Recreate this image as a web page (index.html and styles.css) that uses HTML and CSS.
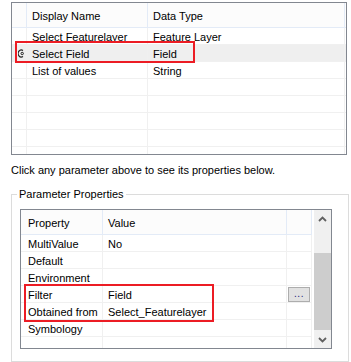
FILE: index.html
```html
<!DOCTYPE html>
<html lang="en">
<head>
  <meta charset="UTF-8" />
  <meta name="viewport" content="width=device-width, initial-scale=1.0" />
  <title>Tool Parameters</title>
  <link rel="stylesheet" href="styles.css">
</head>
<body>
  <div class="param-list">
    <div class="grid-row grid-head">
      <div class="cell rowhead"></div>
      <div class="cell">Display Name</div>
      <div class="cell">Data Type</div>
      <div class="cell filler"></div>
    </div>
    <div class="grid-row">
      <div class="cell rowhead"></div>
      <div class="cell">Select Featurelayer</div>
      <div class="cell">Feature Layer</div>
      <div class="cell filler"></div>
    </div>
    <div class="grid-row selected">
      <div class="cell rowhead">
        <svg class="row-mark" width="6" height="9" viewBox="0 0 6 9"><path d="M5 1.5 A3.2 3.5 0 1 0 5 7.5" fill="none" stroke="#222" stroke-width="1.2"/><circle cx="4.2" cy="4.5" r="1.2" fill="none" stroke="#222" stroke-width="1"/></svg>
      </div>
      <div class="cell">Select Field</div>
      <div class="cell">Field</div>
      <div class="cell filler"></div>
    </div>
    <div class="grid-row">
      <div class="cell rowhead"></div>
      <div class="cell">List of values</div>
      <div class="cell">String</div>
      <div class="cell filler"></div>
    </div>
    <div class="grid-row"><div class="cell rowhead"></div><div class="cell"></div><div class="cell"></div><div class="cell filler"></div></div>
    <div class="grid-row"><div class="cell rowhead"></div><div class="cell"></div><div class="cell"></div><div class="cell filler"></div></div>
    <div class="grid-row"><div class="cell rowhead"></div><div class="cell"></div><div class="cell"></div><div class="cell filler"></div></div>
    <div class="grid-row"><div class="cell rowhead"></div><div class="cell"></div><div class="cell"></div><div class="cell filler"></div></div>
    <div class="grid-row"><div class="cell rowhead"></div><div class="cell"></div><div class="cell"></div><div class="cell filler"></div></div>

    <div class="highlight highlight-field"></div>
  </div>

  <p class="hint">Click any parameter above to see its properties below.</p>

  <fieldset class="param-props">
    <legend>Parameter Properties</legend>
    <div class="prop-grid">
      <div class="prop-table">
        <div class="prop-row grid-head">
          <div class="cell">Property</div>
          <div class="cell">Value</div>
          <div class="cell"></div>
        </div>
        <div class="prop-row">
          <div class="cell">MultiValue</div>
          <div class="cell">No</div>
          <div class="cell"></div>
        </div>
        <div class="prop-row">
          <div class="cell">Default</div>
          <div class="cell"></div>
          <div class="cell"></div>
        </div>
        <div class="prop-row">
          <div class="cell">Environment</div>
          <div class="cell"></div>
          <div class="cell"></div>
        </div>
        <div class="prop-row">
          <div class="cell">Filter</div>
          <div class="cell">Field</div>
          <div class="cell btn-cell"><span class="ellipsis-btn">...</span></div>
        </div>
        <div class="prop-row">
          <div class="cell">Obtained from</div>
          <div class="cell">Select_Featurelayer</div>
          <div class="cell"></div>
        </div>
        <div class="prop-row">
          <div class="cell">Symbology</div>
          <div class="cell"></div>
          <div class="cell"></div>
        </div>
        <div class="prop-row">
          <div class="cell"></div>
          <div class="cell"></div>
          <div class="cell"></div>
        </div>
      </div>

      <div class="scrollbar">
        <div class="scroll-btn">
          <svg width="9" height="6" viewBox="0 0 9 6"><polyline points="1,5 4.5,1.5 8,5" fill="none" stroke="#606060" stroke-width="1.8"/></svg>
        </div>
        <div class="scroll-thumb"></div>
        <div class="scroll-btn down">
          <svg width="9" height="6" viewBox="0 0 9 6"><polyline points="1,1 4.5,4.5 8,1" fill="none" stroke="#606060" stroke-width="1.8"/></svg>
        </div>
      </div>

      <div class="highlight highlight-filter"></div>
    </div>
  </fieldset>
</body>
</html>
```

FILE: styles.css
```css
* {
  box-sizing: border-box;
}

body {
  margin: 0;
  padding: 2px 0 0 11px;
  width: 351px;
  height: 362px;
  overflow: hidden;
  font-family: "Liberation Sans", Arial, sans-serif;
  font-size: 11px;
  color: #000;
  background: #fff;
}

/* parameter list grid */
.param-list {
  position: relative;
  width: 336px;
  height: 153px;
  border: 1px solid #828790;
  overflow: hidden;
}

.grid-row {
  display: grid;
  grid-template-columns: 15px 121px 197px 1fr;
}

.cell {
  height: 17px;
  padding: 1px 0 0 5px;
  line-height: 16px;
  border-right: 1px solid #f0f0f0;
  border-bottom: 1px solid #f0f0f0;
  white-space: nowrap;
  overflow: hidden;
}

.cell.rowhead {
  padding-left: 0;
}

.cell.filler {
  border-right: 0;
}

.grid-head .cell {
  height: 25px;
  line-height: 24px;
  background: #fcfcfc;
  border-color: #e3ebf7;
}

.grid-row.selected .cell {
  background: #efefef;
}

.row-mark {
  display: block;
  margin: 3px 0 0 6px;
}

.highlight {
  position: absolute;
  border: 2px solid #ec1c24;
}

.highlight-field {
  left: 3px;
  top: 38px;
  width: 180px;
  height: 22px;
}

.hint {
  margin: 7px 0 0;
  line-height: 16px;
}

/* parameter properties group */
.param-props {
  margin: 8px 0 0;
  padding: 0 0 12px;
  width: 338px;
  min-width: 0;
  border: 1px solid #dcdcdc;
}

.param-props legend {
  margin-left: 5px;
  padding: 0 2px;
  line-height: 16px;
}

.prop-grid {
  position: relative;
  display: flex;
  width: 312px;
  height: 140px;
  margin: 7px 0 0 8px;
  border: 1px solid #828790;
  overflow: hidden;
}

.prop-table {
  width: 293px;
}

.prop-row {
  display: grid;
  grid-template-columns: 82px 184px 25px;
}

.prop-row .cell:first-child {
  padding-left: 7px;
}

.btn-cell {
  padding: 0;
  overflow: visible;
}

.ellipsis-btn {
  display: block;
  width: 22px;
  height: 15px;
  margin: 1px 0 0 1px;
  border: 1px solid #adadad;
  background: #e1e1e1;
  color: #1c1c78;
  font-size: 10px;
  line-height: 12px;
  text-align: center;
  letter-spacing: 0.5px;
}

.scrollbar {
  width: 17px;
  display: flex;
  flex-direction: column;
  background: #f0f0f0;
}

.scroll-btn {
  height: 17px;
  display: flex;
  align-items: center;
  justify-content: center;
}

.scroll-btn.down {
  margin-top: auto;
}

.scroll-thumb {
  height: 77px;
  margin-top: 26px;
  background: #cdcdcd;
}

.highlight-filter {
  left: 3px;
  top: 74px;
  width: 190px;
  height: 38px;
}
```
